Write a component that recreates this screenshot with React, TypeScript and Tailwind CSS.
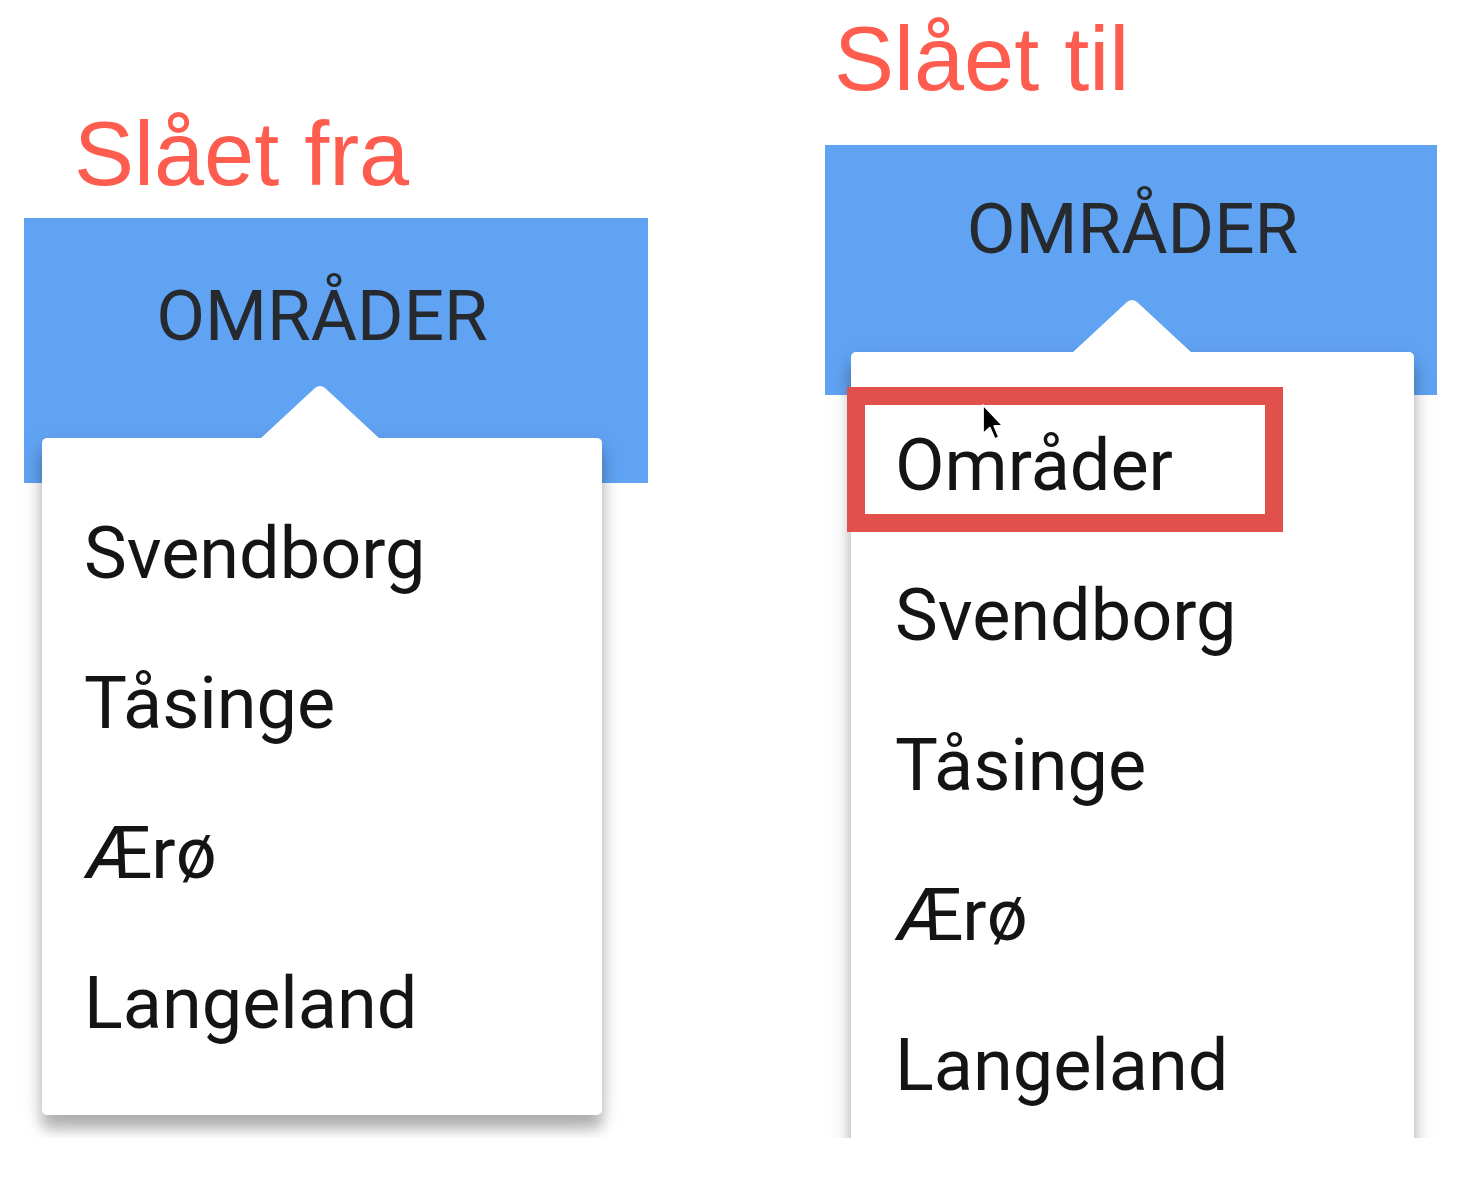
import React from "react";

const areas = ["Svendborg", "Tåsinge", "Ærø", "Langeland"];

interface PanelProps {
  title: string;
  showAll?: boolean;
  wrapClass: string;
  titleClass: string;
  barClass: string;
  labelClass: string;
  cardClass: string;
  arrowClass: string;
  listClass: string;
}

function MouseCursor() {
  return (
    <svg
      className="absolute left-[86px] top-[12px]"
      width="24"
      height="38"
      viewBox="0 0 12 19"
    >
      <path
        d="M1 1 L1 15.5 L4.4 12.3 L6.9 18 L9 17.1 L6.6 11.5 L11 11.5 Z"
        fill="black"
        stroke="white"
        strokeWidth="0.9"
        strokeLinejoin="round"
      />
    </svg>
  );
}

function AreaPanel({
  title,
  showAll,
  wrapClass,
  titleClass,
  barClass,
  labelClass,
  cardClass,
  arrowClass,
  listClass,
}: PanelProps) {
  const rows = showAll ? ["Områder", ...areas] : areas;

  return (
    <div className={wrapClass}>
      <h2
        className={`text-[90px] leading-none text-[#ff5c50] font-['Liberation_Sans',Arial,sans-serif] ${titleClass}`}
      >
        {title}
      </h2>

      {/* tab bar */}
      <div className={`bg-[#61a3f3] ${barClass}`}>
        <div
          className={`text-center text-[71px] leading-none font-normal text-[#262a2f] font-['Roboto',sans-serif] ${labelClass}`}
        >
          OMRÅDER
        </div>
      </div>

      {/* dropdown */}
      <div
        className={`relative bg-white rounded-[5px] shadow-[0_14px_14px_rgba(0,0,0,0.26),0_6px_26px_rgba(0,0,0,0.12)] ${cardClass}`}
      >
        <svg
          className={`absolute -top-[54px] ${arrowClass}`}
          width="120"
          height="55"
          viewBox="0 0 120 55"
        >
          <path d="M0 55 L55 4 Q60 0 65 4 L120 55 Z" fill="white" />
        </svg>
        <ul className={listClass}>
          {rows.map((name, i) => (
            <li
              key={name}
              className="relative h-[150px] text-[72px] leading-[150px] text-[#141414] font-['Roboto',sans-serif]"
            >
              {name}
              {showAll && i === 0 && (
                <>
                  <div className="absolute left-[-48px] top-[-4px] w-[436px] h-[145px] border-[18px] border-[#e1504a]" />
                  <MouseCursor />
                </>
              )}
            </li>
          ))}
        </ul>
      </div>
    </div>
  );
}

export default function App() {
  return (
    <div className="w-[1464px] h-[1202px] bg-white">
      <div className="flex items-start gap-[177px] pl-[24px] h-[1138px] overflow-hidden">
        <AreaPanel
          title="Slået fra"
          wrapClass="w-[624px] pt-[109px]"
          titleClass="pl-[50px]"
          barClass="mt-[19px] h-[265px] pl-[18px]"
          labelClass="w-[560px] pt-[62px]"
          cardClass="ml-[18px] -mt-[45px] w-[560px]"
          arrowClass="left-[218px]"
          listClass="pt-[41px] pb-[36px] pl-[42px]"
        />
        <AreaPanel
          title="Slået til"
          showAll
          wrapClass="w-[612px] pt-[14px]"
          titleClass="pl-[9px]"
          barClass="mt-[41px] h-[250px] pl-[26px]"
          labelClass="w-[563px] pt-[48px]"
          cardClass="ml-[26px] -mt-[43px] w-[563px] h-[900px]"
          arrowClass="left-[221px]"
          listClass="pt-[39px] pl-[44px]"
        />
      </div>
    </div>
  );
}
